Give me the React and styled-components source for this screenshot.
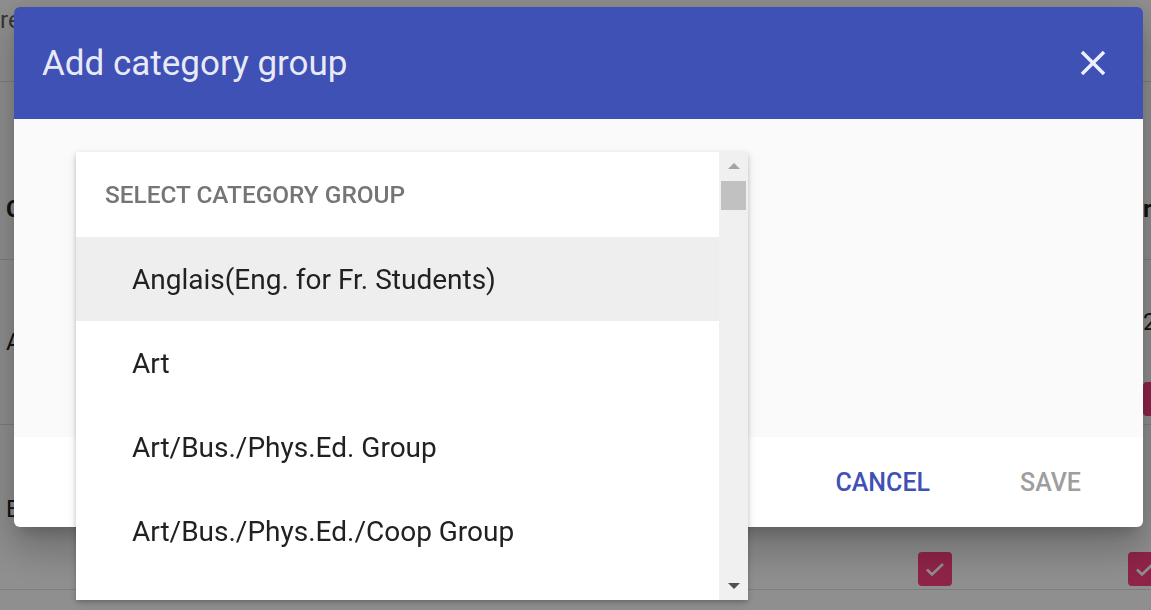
import React from "react";
import styled, { createGlobalStyle } from "styled-components";

const GlobalStyle = createGlobalStyle`
  html, body {
    margin: 0;
    padding: 0;
    height: 100%;
    overflow: hidden;
    font-family: Roboto, "Liberation Sans", Arial, sans-serif;
    background: #fff;
  }
`;

const Page = styled.div`
  width: 1151px;
  height: 610px;
  overflow: hidden;
  background: #ffffff;
  color: #212121;
`;

const TopBar = styled.div`
  height: 82px;
  border-bottom: 1px solid #e0e0e0;
  box-sizing: border-box;
  padding: 6px 0 0 0;
  font-size: 24px;
  color: #616161;
`;

const Row = styled.div`
  display: flex;
  align-items: ${(p) => p.$align || "center"};
  height: ${(p) => p.$h}px;
  border-bottom: 1px solid #e0e0e0;
  box-sizing: border-box;
  padding-left: 6px;
  font-size: 24px;
  font-weight: ${(p) => (p.$head ? 700 : 400)};
  white-space: nowrap;
`;

const Cell = styled.div`
  width: ${(p) => p.$w}px;
  flex: none;
  display: flex;
  flex-direction: column;
  align-items: flex-start;
  justify-content: center;
  gap: ${(p) => p.$gap || 10}px;
`;

const Check = styled.div`
  width: 34px;
  height: 34px;
  border-radius: 4px;
  background: #ff4081;
  display: flex;
  align-items: center;
  justify-content: center;
`;

const Overlay = styled.div`
  position: fixed;
  inset: 0;
  background: rgba(0, 0, 0, 0.44);
  padding: 7px 0 0 14px;
`;

const Dialog = styled.div`
  position: relative;
  width: 1129px;
  height: 520px;
  border-radius: 6px;
  display: flex;
  flex-direction: column;
  box-shadow: 0 11px 15px -7px rgba(0, 0, 0, 0.2), 0 24px 38px 3px rgba(0, 0, 0, 0.14),
    0 9px 46px 8px rgba(0, 0, 0, 0.12);
`;

const Header = styled.div`
  height: 112px;
  flex: none;
  background: #3f51b5;
  border-radius: 6px 6px 0 0;
  display: flex;
  align-items: center;
  justify-content: space-between;
  padding: 0 29px 0 28px;
  color: rgba(255, 255, 255, 0.9);
`;

const Title = styled.h2`
  margin: 0;
  font-size: 35px;
  font-weight: 400;
`;

const CloseButton = styled.button`
  border: 0;
  background: transparent;
  padding: 0;
  width: 42px;
  height: 42px;
  display: flex;
  color: #eceffd;
`;

const Body = styled.div`
  flex: 1;
  background: #fafafa;
`;

const Footer = styled.div`
  height: 90px;
  flex: none;
  background: #fff;
  border-radius: 0 0 6px 6px;
  display: flex;
  align-items: center;
  justify-content: flex-end;
  gap: 30px;
  padding-right: 32px;
`;

const TextButton = styled.button`
  border: 0;
  background: transparent;
  font-family: Roboto, "Liberation Sans", Arial, sans-serif;
  font-size: 25px;
  font-weight: 500;
  padding: 12px 30px;
  color: ${(p) => (p.$disabled ? "#9e9e9e" : "#3f51b5")};
`;

const Menu = styled.div`
  position: absolute;
  left: 62px;
  top: 145px;
  width: 672px;
  height: 448px;
  display: flex;
  background: #fff;
  box-shadow: 0 2px 4px rgba(0, 0, 0, 0.18), 0 4px 10px rgba(0, 0, 0, 0.12);
  overflow: hidden;
`;

const List = styled.div`
  flex: 1;
  display: flex;
  flex-direction: column;
`;

const ListHeader = styled.div`
  height: 85px;
  flex: none;
  display: flex;
  align-items: center;
  padding-left: 29px;
  font-size: 24.4px;
  font-weight: 500;
  color: #757575;
`;

const Item = styled.div`
  height: 84px;
  flex: none;
  display: flex;
  align-items: center;
  padding-left: 56px;
  font-size: 28px;
  color: #212121;
  white-space: nowrap;
  background: ${(p) => (p.$active ? "#eeeeee" : "transparent")};
`;

const Scrollbar = styled.div`
  width: 29px;
  flex: none;
  background: #f0f0f0;
  display: flex;
  flex-direction: column;
  align-items: center;
`;

const Arrow = styled.div`
  width: 0;
  height: 0;
  border-left: 6px solid transparent;
  border-right: 6px solid transparent;
  ${(p) =>
    p.$down
      ? "border-top: 6px solid #505050; margin-top: auto; margin-bottom: 11px;"
      : "border-bottom: 6px solid #a3a3a3; margin-top: 11px;"}
`;

const Thumb = styled.div`
  width: 25px;
  height: 29px;
  margin-top: 12px;
  background: #c1c1c1;
`;

const items = [
  "Anglais(Eng. for Fr. Students)",
  "Art",
  "Art/Bus./Phys.Ed. Group",
  "Art/Bus./Phys.Ed./Coop Group",
  "Business Group",
];

const CheckMark = () => (
  <svg width="24" height="24" viewBox="0 0 24 24">
    <path d="M4 12.5l5 5L20 7" fill="none" stroke="#fff" strokeWidth="2.6" />
  </svg>
);

export default function App() {
  return (
    <>
      <GlobalStyle />
      <Page>
        <TopBar>records</TopBar>
        <Row $h={178} $head $align="flex-end">
          <Cell $w={1137} style={{ paddingBottom: 36 }}>Category</Cell>
          <Cell $w={40} style={{ paddingBottom: 36 }}>rs</Cell>
        </Row>
        <Row $h={165}>
          <Cell $w={1137}>Anglais</Cell>
          <Cell $w={40} $gap={46} style={{ paddingTop: 40 }}>
            <span>2</span>
            <Check><CheckMark /></Check>
          </Cell>
        </Row>
        <Row $h={165}>
          <Cell $w={912} style={{ alignSelf: "flex-start", paddingTop: 70 }}>English</Cell>
          <Cell $w={210} style={{ alignSelf: "flex-end", paddingBottom: 3 }}>
            <Check><CheckMark /></Check>
          </Cell>
          <Cell $w={40} style={{ alignSelf: "flex-end", paddingBottom: 3 }}>
            <Check><CheckMark /></Check>
          </Cell>
        </Row>
      </Page>
      <Overlay>
        <Dialog>
          <Header>
            <Title>Add category group</Title>
            <CloseButton aria-label="close">
              <svg width="42" height="42" viewBox="0 0 24 24">
                <path
                  fill="currentColor"
                  d="M19 6.41L17.59 5 12 10.59 6.41 5 5 6.41 10.59 12 5 17.59 6.41 19 12 13.41 17.59 19 19 17.59 13.41 12z"
                />
              </svg>
            </CloseButton>
          </Header>
          <Body />
          <Footer>
            <TextButton>CANCEL</TextButton>
            <TextButton $disabled>SAVE</TextButton>
          </Footer>
          <Menu>
            <List>
              <ListHeader>SELECT CATEGORY GROUP</ListHeader>
              {items.map((it, i) => (
                <Item key={it} $active={i === 0}>
                  {it}
                </Item>
              ))}
            </List>
            <Scrollbar>
              <Arrow />
              <Thumb />
              <Arrow $down />
            </Scrollbar>
          </Menu>
        </Dialog>
      </Overlay>
    </>
  );
}
